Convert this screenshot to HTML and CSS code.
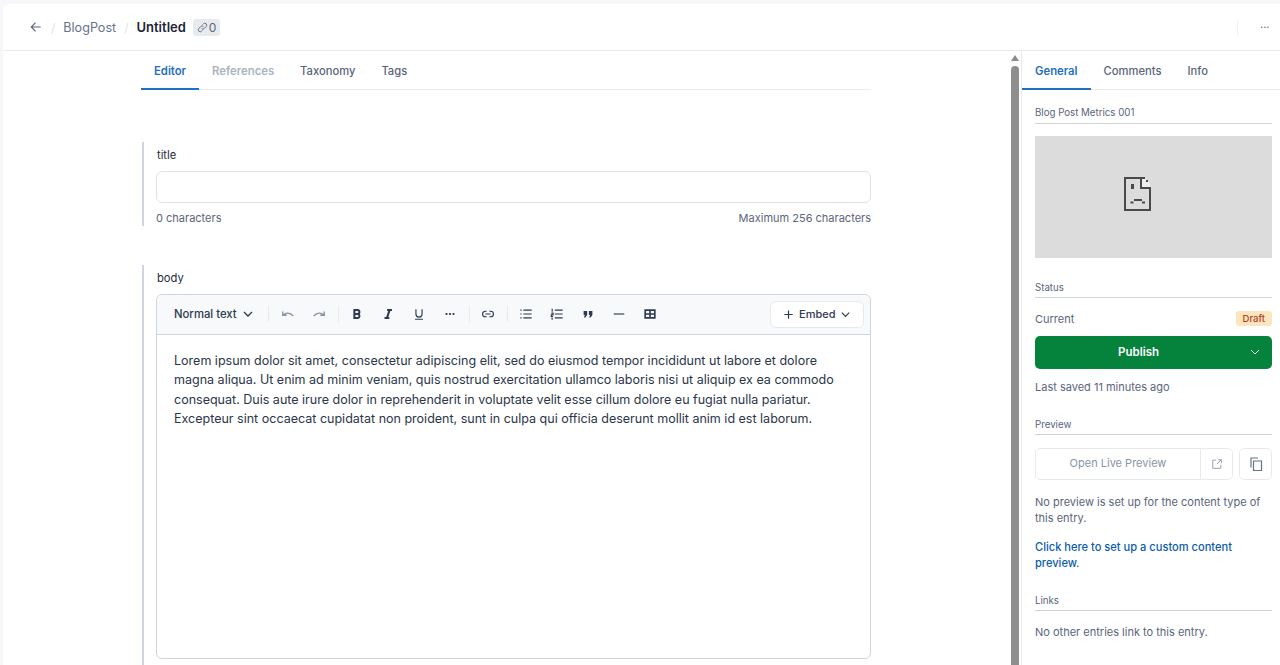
FILE: index.html
```html
<!DOCTYPE html>
<html lang="en">
<head>
<meta charset="utf-8">
<title>Untitled - BlogPost</title>
<link rel="stylesheet" href="styles.css">
</head>
<body>
<div class="app">
  <header class="topbar">
    <svg class="back" viewBox="0 0 14 14"><path d="M12.500 7H1.500M6.500 2 1.500 7l5 5"/></svg>
    <span class="slash first">/</span>
    <span class="crumb">BlogPost</span>
    <span class="slash second">/</span>
    <span class="title">Untitled</span>
    <span class="badge"><svg viewBox="0 0 12 12"><path d="M5 7a2 2 0 0 0 3 0l2-2a2 2 0 0 0-3-3l-.8.8M7 5a2 2 0 0 0-3 0L2 7a2 2 0 0 0 3 3l.8-.8"/></svg>0</span>
    <span class="top-sep"></span>
    <span class="top-more">···</span>
  </header>
  <div class="workspace">
    <main class="main">
      <nav class="tabs">
        <span class="tab active">Editor</span>
        <span class="tab muted">References</span>
        <span class="tab">Taxonomy</span>
        <span class="tab">Tags</span>
      </nav>
      <section class="field title-field">
        <label class="label">title</label>
        <div class="input"></div>
        <div class="helper"><span>0 characters</span><span>Maximum 256 characters</span></div>
      </section>
      <section class="field body-field">
        <label class="label">body</label>
        <div class="editor">
          <div class="toolbar">
            <span class="format">Normal text <svg class="chev" viewBox="0 0 12 12"><path d="m2 4 4 4 4-4"/></svg></span>
            <i class="sep s1"></i>
            <span class="tool dim"><svg viewBox="0 0 16 16"><path d="M2 5v4.500h4.500M2.500 9.300c3-3.200 7.500-3.200 11.500 1"/></svg></span>
            <span class="tool dim"><svg viewBox="0 0 16 16"><path d="M14 5v4.500H9.500M13.500 9.300c-3-3.200-7.500-3.200-11.500 1"/></svg></span>
            <i class="sep"></i>
            <span class="tool"><svg viewBox="0 0 16 16"><path class="bold" d="M5 3.500h3.500a2.200 2.200 0 0 1 0 4.500H5zM5 8h4a2.300 2.300 0 0 1 0 4.500H5z"/></svg></span>
            <span class="tool"><svg viewBox="0 0 16 16"><path class="bold" d="M7 3.500h5.500M4 12.500h5.500M9.800 3.500l-3 9"/></svg></span>
            <span class="tool"><svg viewBox="0 0 16 16"><path d="M4.500 2.500V8a3.500 3.500 0 0 0 7 0V2.500M3.500 14h9"/></svg></span>
            <span class="tool"><svg viewBox="0 0 16 16"><path class="dots" d="M3 8h2M7 8h2M11 8h2"/></svg></span>
            <i class="sep"></i>
            <span class="tool"><svg viewBox="0 0 16 16"><path d="M6.500 4.800H5a3.200 3.200 0 0 0 0 6.400h1.500M9.500 4.800H11a3.200 3.200 0 0 1 0 6.400H9.500M5 8h6"/></svg></span>
            <i class="sep"></i>
            <span class="tool"><svg viewBox="0 0 16 16"><path d="M5 3.500h9.500M5 8h9.500M5 12.500h9.500M1.500 3.500h1.500M1.500 8h1.500M1.500 12.500h1.500"/></svg></span>
            <span class="tool"><svg viewBox="0 0 16 16"><path d="M5.500 3.500h9M5.500 8h9M5.500 12.500h9M2.500 2v3.500M1.500 7h2v2h-2v2h2M1.500 13.500h2"/></svg></span>
            <span class="tool"><svg viewBox="0 0 16 16"><path class="solid" d="M3 4.500h4V9l-2 3H3.400l1-3H3zM9 4.500h4V9l-2 3H9.400l1-3H9z"/></svg></span>
            <span class="tool"><svg viewBox="0 0 16 16"><path d="M2 8h12"/></svg></span>
            <span class="tool"><svg viewBox="0 0 16 16"><path class="heavy" d="M2.500 3.500h11v9h-11zM2.500 8h11M8 3.500v9"/></svg></span>
            <span class="embed"><svg viewBox="0 0 12 12"><path d="M6 1.500v9M1.500 6h9"/></svg>Embed<svg class="chev" viewBox="0 0 12 12"><path d="m2 4 4 4 4-4"/></svg></span>
          </div>
          <div class="content">Lorem ipsum dolor sit amet, consectetur adipiscing elit, sed do eiusmod tempor incididunt ut labore et dolore magna aliqua. Ut enim ad minim veniam, quis nostrud exercitation ullamco laboris nisi ut aliquip ex ea commodo consequat. Duis aute irure dolor in reprehenderit in voluptate velit esse cillum dolore eu fugiat nulla pariatur. Excepteur sint occaecat cupidatat non proident, sunt in culpa qui officia deserunt mollit anim id est laborum.</div>
        </div>
      </section>
    </main>
    <div class="scrollbar"><span class="arrow"></span><span class="thumb"></span></div>
    <aside class="sidebar">
      <nav class="side-tabs">
        <span class="tab active">General</span>
        <span class="tab">Comments</span>
        <span class="tab">Info</span>
      </nav>
      <div class="panel">
        <h2 class="heading">Blog Post Metrics 001</h2>
        <div class="broken">
          <svg viewBox="0 0 27 34"><path class="fold" d="M17 1h4l5 5v5h-9z"/><path class="frame" d="M21 1H1v32h25V11H17V1"/><path class="pix" d="M7 7h3v5H7zM22 3h2v2h-2zM10 22h8v2h-8zM6.500 24.500h3v2h-3zM18 24.500h3v2h-3z"/></svg>
        </div>
        <h2 class="heading status-h">Status</h2>
        <div class="current"><span>Current</span><span class="draft">Draft</span></div>
        <div class="publish"><span>Publish</span><svg class="chev" viewBox="0 0 12 12"><path d="m2 4 4 4 4-4"/></svg></div>
        <p class="saved">Last saved 11 minutes ago</p>
        <h2 class="heading preview-h">Preview</h2>
        <div class="preview-row">
          <div class="live">
            <span class="live-text">Open Live Preview</span>
            <span class="live-icon"><svg viewBox="0 0 14 14"><path d="M6 2.500H2v9.500h9.500V8M8 2h4v4M12 2 7 7"/></svg></span>
          </div>
          <span class="copy"><svg viewBox="0 0 16 16"><path d="M5.500 5h8v9.500h-8zM3 11.500V2h7"/></svg></span>
        </div>
        <p class="note">No preview is set up for the content type of this entry.</p>
        <a class="setup">Click here to set up a custom content preview.</a>
        <h2 class="heading links-h">Links</h2>
        <p class="none">No other entries link to this entry.</p>
      </div>
    </aside>
  </div>
</div>
</body>
</html>
```

FILE: styles.css
```css
* { box-sizing: border-box; }
html, body { height: 100%; margin: 0; overflow: hidden; }
body {
  background: #f5f7f8;
  font-family: Inter, "Liberation Sans", sans-serif;
  color: #1f2a3d;
  padding-top: 4px;
}
svg { display: block; fill: none; stroke: currentColor; stroke-width: 1.3; }
.app {
  height: 661px;
  margin-left: 3px;
  background: #fff;
  border-top-left-radius: 6px;
  display: flex;
  flex-direction: column;
}

.topbar {
  height: 47px;
  flex: none;
  border-bottom: 1px solid #e7ebee;
  display: flex;
  align-items: center;
  padding-left: 27px;
  font-size: 12.600px;
}
.back { width: 12px; height: 12px; color: #5a657c; }
.slash { color: #e0e4e9; font-size: 12px; }
.slash.first { margin-left: 9px; }
.slash.second { margin-left: 8px; }
.crumb { color: #67728a; margin-left: 8px; }
.title { font-size: 13px; font-weight: 600; color: #1b2537; margin-left: 8px; }
.badge {
  display: flex;
  align-items: center;
  gap: 1px;
  height: 17px;
  margin-left: 7px;
  padding: 0 4px;
  border-radius: 3px;
  background: #e7ebee;
  color: #5a657c;
  font-size: 12px;
}
.badge svg { width: 11px; height: 11px; stroke-width: 1; }
.top-sep { width: 1px; height: 15px; background: #eef0f3; margin-left: auto; }
.top-more { color: #67728a; font-size: 11px; margin: 0 9px 0 22px; width: 11px; }

.workspace { flex: 1; min-height: 0; display: flex; }
.main { width: 1008px; flex: none; padding-left: 138px; }

.tabs, .side-tabs {
  display: flex;
  height: 39px;
  border-bottom: 1px solid #e7ebee;
  font-size: 11.200px;
  font-weight: 500;
  color: #5a657c;
}
.tabs { width: 730px; }
.tab {
  padding: 0 13px;
  line-height: 40px;
  height: 39px;
  white-space: nowrap;
}
.tab.active { color: #1f6fc4; border-bottom: 2px solid #1f6fc4; font-weight: 600; font-size: 11.300px; }
.tab.muted { color: #aab4c0; font-weight: 600; font-size: 11.300px; }

.field { border-left: 2px solid #cfd5e0; margin-left: 1px; padding-left: 12px; width: 729px; }
.label { display: block; font-size: 11.200px; line-height: 14px; color: #1f2a3d; padding-left: 1px; }
.title-field { margin-top: 52px; padding-top: 6px; height: 84px; }
.input { height: 32px; margin-top: 9px; border: 1px solid #dfe3e8; border-radius: 6px; }
.helper {
  display: flex;
  justify-content: space-between;
  margin-top: 8px;
  font-size: 11px;
  line-height: 14px;
  color: #5a657c;
}
.body-field { margin-top: 39px; padding-top: 6px; height: 400px; }
.editor {
  height: 365px;
  margin-top: 9px;
  border: 1px solid #cfd5dc;
  border-radius: 6px;
}
.toolbar {
  height: 40px;
  background: #f7f9fa;
  border-bottom: 1px solid #cfd5dc;
  border-radius: 6px 6px 0 0;
  display: flex;
  align-items: center;
  padding: 0 6px 1px 17px;
}
.format { display: flex; align-items: center; gap: 5px; font-size: 11.300px; font-weight: 500; color: #2e3a4f; }
.chev { width: 12px; height: 12px; }
.sep { width: 1px; height: 16px; background: #e7ebee; margin: 0 3px; flex: none; }
.sep.s1 { margin-left: 14px; margin-right: 4px; }
.tool { width: 31px; flex: none; height: 24px; display: flex; align-items: center; justify-content: center; color: #2e3a4f; }
.tool svg { width: 14px; height: 14px; }
.tool.dim { color: #8a94a4; }
.tool.dim svg { stroke-width: 1.600; }
.heavy { stroke-width: 1.900; }
.bold { stroke-width: 2.300; }
.dots { stroke-width: 2.200; }
.solid { fill: currentColor; stroke: none; }
.embed {
  margin-left: auto;
  width: 94px;
  height: 27px;
  display: flex;
  align-items: center;
  gap: 5px;
  padding-left: 12px;
  background: #fff;
  border: 1px solid #e7ebee;
  border-radius: 6px;
  font-size: 11px;
  font-weight: 500;
  color: #2e3a4f;
}
.embed svg { width: 11px; height: 11px; flex: none; }
.content {
  padding: 16px 17px;
  font-size: 12.520px;
  line-height: 19.400px;
  color: #2b3648;
}

.scrollbar { width: 8px; flex: none; display: flex; flex-direction: column; align-items: center; padding-top: 4px; gap: 5px; }
.arrow { width: 0; height: 0; border: 4px solid transparent; border-top: 0; border-bottom: 6px solid #8c8c8c; }
.thumb { flex: 1; width: 8px; background: #8e8e8e; border-radius: 4px 4px 0 0; }

.sidebar { margin-left: 2px; width: 259px; flex: none; border-left: 1px solid #e7ebee; }
.panel { padding: 0 8px 0 13px; }
.heading {
  margin: 0;
  height: 21px;
  padding-top: 4px;
  border-bottom: 1px solid #cfd5dc;
  font-size: 9.700px;
  line-height: 14px;
  font-weight: 400;
  color: #5a657c;
}
.panel > .heading:first-child { margin-top: 13px; padding-top: 3px; }
.broken {
  margin-top: 12px;
  height: 122px;
  background: #dcdcdc;
  display: flex;
  align-items: center;
  justify-content: center;
  padding: 0 32px 6px 0;
}
.broken svg { width: 27px; height: 34px; color: #4a4a4a; }
.frame { stroke-width: 2; }
.fold { fill: #eeeeee; stroke: none; }
.pix { fill: #4a4a4a; stroke: none; }
.status-h { margin-top: 19px; }
.current {
  height: 15px;
  margin-top: 13px;
  display: flex;
  justify-content: space-between;
  align-items: center;
  font-size: 11px;
  color: #5a657c;
}
.draft {
  height: 15px;
  padding: 0 7px;
  border-radius: 3px;
  background: #fde5c0;
  color: #b0421c;
  font-size: 9.500px;
  font-weight: 500;
  line-height: 15px;
}
.publish {
  height: 33px;
  margin-top: 10px;
  padding: 0 11px 2px 83px;
  background: #05823c;
  color: #fff;
  border-radius: 5px;
  display: flex;
  align-items: center;
  justify-content: space-between;
  font-size: 11.500px;
  font-weight: 600;
}
.publish .chev { stroke-width: 1; }
.saved { margin: 11px 0 0; font-size: 11px; line-height: 14px; color: #5a657c; }
.preview-h { margin-top: 20px; }
.preview-row { display: flex; justify-content: space-between; margin-top: 13px; }
.live {
  width: 198px;
  height: 32px;
  display: flex;
  border: 1px solid #e7ebee;
  border-radius: 5px;
  font-size: 11px;
  color: #8a94a4;
}
.live-text { flex: 1; text-align: center; line-height: 29px; }
.live-icon { width: 32px; border-left: 1px solid #e7ebee; display: flex; align-items: center; justify-content: center; }
.live-icon svg { width: 12px; height: 12px; stroke-width: 1; }
.copy {
  width: 33px;
  height: 32px;
  border: 1px solid #e7ebee;
  border-radius: 5px;
  display: flex;
  align-items: center;
  justify-content: center;
  color: #67728a;
}
.copy svg { width: 16px; height: 16px; stroke-width: 1.200; }
.note { margin: 14px 0 0; font-size: 11px; line-height: 16px; color: #5a657c; }
.setup { display: block; margin-top: 13px; font-size: 11.100px; line-height: 16px; font-weight: 500; color: #0b5cad; }
.links-h { margin-top: 19px; }
.none { margin: 14px 0 0; font-size: 11px; line-height: 14px; color: #5a657c; }
```
